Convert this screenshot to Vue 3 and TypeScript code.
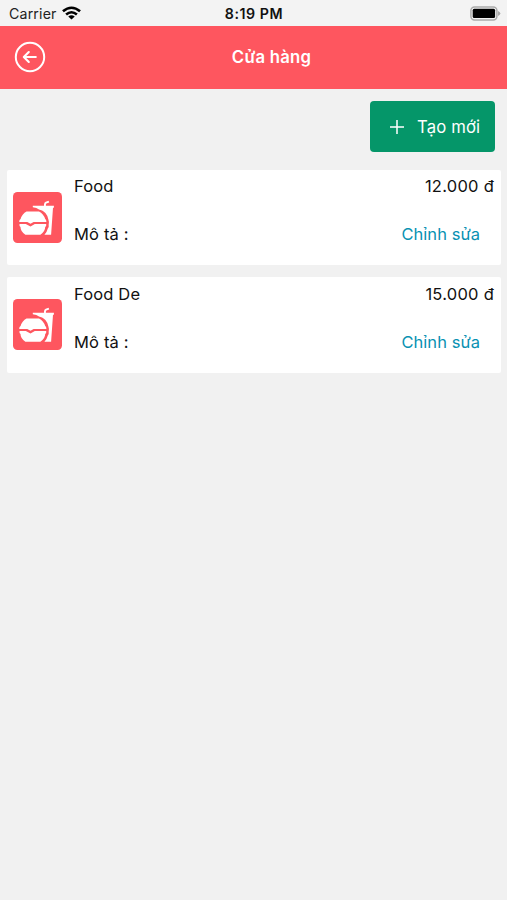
<script setup lang="ts">
interface Product {
  id: number
  name: string
  price: string
}

const products: Product[] = [
  { id: 1, name: 'Food', price: '12.000 đ' },
  { id: 2, name: 'Food De', price: '15.000 đ' },
]
</script>

<template>
  <div class="screen">
    <div class="status">
      <div class="carrier">
        <span>Carrier</span>
        <svg class="wifi" viewBox="0 0 18 14" width="19" height="14" preserveAspectRatio="none">
          <g fill="none" stroke="#000" stroke-width="2.5">
            <path d="M0.9 5.2 Q9 -1.8 17.1 5.2" />
            <path d="M3.9 8.5 Q9 4.1 14.1 8.5" />
          </g>
          <path d="M9 13.6 L5.9 10.5 Q9 8.1 12.1 10.5 Z" fill="#000" />
        </svg>
      </div>
      <span class="time">8:19 PM</span>
      <svg class="battery" viewBox="0 0 31 15" width="31" height="15">
        <rect x="0.9" y="0.9" width="26" height="13" rx="3.6" fill="#f4f4f4" stroke="#aaa" stroke-width="1.5" />
        <rect x="2.7" y="2.7" width="22.4" height="9.4" rx="1.5" fill="#000" />
        <path d="M28 5 Q30.4 6.2 30.4 7.5 Q30.4 8.8 28 10 Z" fill="#aaa" />
      </svg>
    </div>

    <header class="header">
      <button class="back" aria-label="Back">
        <svg viewBox="0 0 32 32" width="32" height="32" fill="none" stroke="#fff" stroke-width="2" stroke-linecap="round" stroke-linejoin="round">
          <circle cx="16" cy="16" r="14.2" />
          <path d="M21.8 16 H10 M14.8 11 L9.8 16 L14.8 21" stroke-width="2.1" />
        </svg>
      </button>
      <h1 class="title">Cửa hàng</h1>
    </header>

    <div class="actions">
      <button class="create">
        <svg viewBox="0 0 16 16" width="16" height="16" fill="none" stroke="#fff" stroke-width="1.5">
          <path d="M8 1 V15 M1 8 H15" />
        </svg>
        <span>Tạo mới</span>
      </button>
    </div>

    <main class="list">
      <article v-for="product in products" :key="product.id" class="card">
        <svg class="thumb" viewBox="0 0 49 51" width="49" height="51">
          <rect width="49" height="51" rx="4.5" fill="#fe565f" />
          <path
            fill="#fff"
            d="M19.8 13.7 H31 V12.4 Q31 10.4 32.7 9.7 L35.6 8.7 L36.2 10.5 L33.4 11.6 Q32.9 11.9 32.9 12.5 V13.7 H40.9 V15.7 H40 L38.1 42.8 H31.4 Q34 40 34.8 36.6 Q36.2 34.6 35.6 32.4 Q36.4 30.4 35.4 27.6 Q34 19.4 26 17.5 Q23.8 15.7 19.8 15.3 Z"
          />
          <path
            class="burger-gap"
            d="M6.2 30 Q6.2 27.6 7.6 26.9 Q8.9 19.5 16.2 19.5 H23.4 Q30.7 19.5 32.2 26.9 Q33.6 27.5 33.4 32 Q33.6 34.6 32.2 35.1 Q32.1 40 27.4 42.8 H12.4 Q7.5 40 7.5 35.1 Q6.1 34.4 6.2 30 Z"
          />
          <g fill="#fff">
            <path d="M6.2 29.9 Q6.2 27.6 7.6 26.9 Q9.3 21.8 13.5 19.5 H26 Q30.4 21.8 32.2 26.9 Q33.4 27.5 33.4 29.9 H20.6 L17.5 31.8 L14.3 29.9 Z" />
            <path d="M6.5 32 H12.8 L17.5 34.4 L21.8 32 H33.2 Q33.6 34.6 32.2 35.1 Q32.1 39.6 27.4 42.8 H12.4 Q7.5 39.6 7.5 35.1 Q6.1 34.4 6.5 32 Z" />
          </g>
        </svg>
        <div class="details">
          <div class="row">
            <span>{{ product.name }}</span>
            <span class="price">{{ product.price }}</span>
          </div>
          <div class="row">
            <span>Mô tả :</span>
            <a class="edit">Chỉnh sửa</a>
          </div>
        </div>
      </article>
    </main>
  </div>
</template>

<style>
body {
  background: #f1f1f1;
}
</style>

<style scoped>
.screen {
  box-sizing: border-box;
  width: 100%;
  height: 900px;
  background: #f1f1f1;
  font-family: Inter, "Liberation Sans", sans-serif;
  font-size: 16.5px;
  letter-spacing: 0.15px;
  color: #111;
}

.status {
  display: grid;
  grid-template-columns: 1fr auto 1fr;
  align-items: center;
  height: 25.5px;
  box-sizing: border-box;
  padding: 1px 6px 0 9px;
  background: #f3f3f3;
}

.carrier {
  display: flex;
  align-items: center;
  gap: 5px;
  font-size: 14.2px;
  line-height: 19px;
  color: #222;
}

.wifi {
  margin-top: -1px;
}

.time {
  font-size: 14.2px;
  font-weight: 600;
  line-height: 19px;
  letter-spacing: 0.55px;
  margin-right: 2px;
}

.battery {
  justify-self: end;
}

.header {
  display: grid;
  grid-template-columns: 60px 1fr 24px;
  align-items: center;
  height: 63px;
  box-sizing: border-box;
  background: #fe565f;
}

.back {
  display: flex;
  padding: 0;
  margin-left: 14px;
  border: 0;
  background: none;
}

.title {
  margin: 0;
  padding-bottom: 1px;
  text-align: center;
  font-size: 16.7px;
  font-weight: 600;
  line-height: 20px;
  letter-spacing: 0.25px;
  color: #fff;
}

.actions {
  display: flex;
  justify-content: flex-end;
  padding: 12.5px 12px 17.7px;
}

.create {
  display: flex;
  align-items: center;
  gap: 12px;
  box-sizing: border-box;
  width: 125px;
  height: 51px;
  padding: 0 0 0 19px;
  border: 0;
  border-radius: 4px;
  background: #059669;
  color: #fff;
  font-family: inherit;
  font-size: 16.7px;
  letter-spacing: 0.15px;
  white-space: nowrap;
}

.list {
  display: flex;
  flex-direction: column;
  gap: 12px;
  padding: 0 6px 0 7px;
}

.card {
  display: flex;
  align-items: center;
  height: 95.5px;
  box-sizing: border-box;
  padding: 0 7px 0 6px;
  border-radius: 2px;
  background: #fff;
}

.thumb {
  flex: none;
}

.burger-gap {
  fill: #fe565f;
  stroke: #fe565f;
  stroke-width: 3.6;
}

.details {
  flex: 1;
  height: 100%;
  box-sizing: border-box;
  padding: 6.4px 0 0 12px;
}

.row {
  display: flex;
  justify-content: space-between;
  height: 48px;
  line-height: 20px;
}

.price {
  letter-spacing: 0.25px;
}

.edit {
  margin-right: 14px;
  letter-spacing: 0.05px;
  color: #0891b2;
}
</style>
